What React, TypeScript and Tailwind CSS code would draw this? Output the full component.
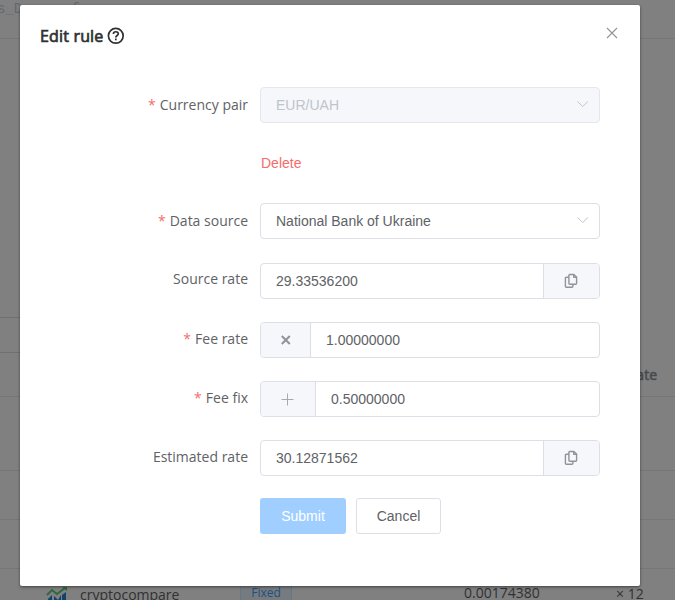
import React from 'react';

const sans = "font-['Open_Sans','Noto_Sans',sans-serif]";
const arial = "font-['Liberation_Sans',Arial,sans-serif]";

function Label({ text, required, className = '' }: { text: string; required?: boolean; className?: string }) {
  return (
    <label className={`${sans} w-[240px] shrink-0 pr-3 text-right text-[14px] leading-9 text-[#606266] ${className}`}>
      {required && <span className="mr-1 text-[#f56c6c]">*</span>}
      {text}
    </label>
  );
}

function Chevron() {
  return (
    <svg className="relative -top-px" width="12" height="8" viewBox="0 0 12 8" fill="none" stroke="#c0c4cc" strokeWidth="1">
      <path d="M.5 1.500 5.700 6.500 10.900 1.500" />
    </svg>
  );
}

function Copy() {
  return (
    <svg className="mr-[2px]" width="14" height="16" viewBox="0 0 14 16" fill="none" stroke="#909399" strokeWidth="1.4" strokeLinejoin="round">
      <path d="M5.900 1.500h4l2.700 2.400v6.300q0 1-1 1H5.900q-1 0-1-1V2.500q0-1 1-1z" />
      <path d="M9.700 1.800v2.400h2.700" />
      <path d="M4.900 4.300H2.400q-1 0-1 1v7.900q0 1 1 1h5.500q1 0 1-1v-1.900" />
    </svg>
  );
}

function Select({ value, disabled }: { value: string; disabled?: boolean }) {
  return (
    <div
      className={`${arial} flex h-9 w-[340px] items-center justify-between rounded border pr-[10px] pl-[15px] text-[14px] ${
        disabled ? 'border-[#e4e7ed] bg-[#f5f7fa] text-[#c0c4cc]' : 'border-[#dcdfe6] bg-white text-[#606266]'
      }`}
    >
      <span>{value}</span>
      <Chevron />
    </div>
  );
}

function Field({ value, prefix, prefixWidth = '', copy }: { value: string; prefix?: React.ReactNode; prefixWidth?: string; copy?: boolean }) {
  return (
    <div className={`${arial} flex h-9 w-[340px] overflow-hidden rounded border border-[#dcdfe6] bg-white text-[14px] text-[#606266]`}>
      {prefix && <span className={`flex items-center justify-center border-r border-[#dcdfe6] bg-[#f5f7fa] ${prefixWidth}`}>{prefix}</span>}
      <span className="flex flex-1 items-center pl-[15px]">{value}</span>
      {copy && (
        <span className="flex w-14 items-center justify-center border-l border-[#dcdfe6] bg-[#f5f7fa]">
          <Copy />
        </span>
      )}
    </div>
  );
}

function Backdrop() {
  return (
    <div className={`${sans} flex h-[600px] w-full flex-col bg-[#808080] text-[14px] text-[#303133]`}>
      <div className="h-[39px] shrink-0 border-b border-[#777778] font-['Liberation_Mono',monospace] text-[14px] leading-[19px] text-[#626970]">
        <span className="-ml-[3px]">s_D</span>
        <span className="ml-[49px]">f</span>
      </div>
      <div className="h-[279px] w-10 shrink-0 border-b border-[#6e7073]" />
      <div className="h-[35px] w-10 shrink-0 border-b border-[#6e7073]" />
      <div className="flex h-11 shrink-0 items-center justify-end border-b border-[#757679] pr-[18px] font-medium text-[#484a4d] [-webkit-text-stroke:0.6px_#484a4d]">Rate</div>
      <div className="h-[74px] shrink-0 border-b border-[#757679]" />
      <div className="h-[49px] shrink-0 border-b border-[#757679]" />
      <div className="h-[49px] shrink-0 border-b border-[#757679]" />
      <div className="flex h-[31px] shrink-0">
        <svg className="mt-[17px] ml-[46px] shrink-0" width="22" height="20" viewBox="0 0 22 20">
          <path d="M2 13 6 9v11H2zM8 20V10l4 4 3-5v11zM16 9l4-3v14h-4z" fill="#12436b" />
          <path d="m1 9 5-5 5 4 8-6" fill="none" stroke="#2d693e" strokeWidth="2" />
          <path d="M16 1h5v4" fill="#2d693e" />
        </svg>
        <span className="mt-[15px] ml-3 w-[160px] leading-[22px]">cryptocompare</span>
        <span className="mt-[12px] flex h-6 w-[52px] shrink-0 items-center justify-center border border-[#63768a] bg-[#767b80] text-[12px] leading-6 text-[#204f80]">Fixed</span>
        <span className="mt-[13px] ml-[172px] w-[152px] leading-[22px]">0.00174380</span>
        <span className="mt-[14px] leading-[22px]">× 12</span>
      </div>
    </div>
  );
}

export default function App() {
  return (
    <div className="relative h-[600px] w-[675px] overflow-hidden">
      <Backdrop />
      <section role="dialog" className="absolute top-[5px] left-5 flex h-[581px] w-[620px] flex-col rounded-[2px] bg-white shadow-[0_1px_3px_rgba(0,0,0,0.5)]">
        <header className="flex h-[82px] shrink-0 items-start justify-between pr-[22px] pl-5">
          <h1 className={`${sans} mt-[19px] flex items-center text-[16px] leading-6 font-medium tracking-[0.17px] text-[#303133] [-webkit-text-stroke:0.7px_#303133]`}>
            Edit rule
            <svg className="ml-1" width="18" height="18" viewBox="0 0 18 18" fill="none" stroke="#303133" strokeWidth="1.7">
              <circle cx="8.8" cy="8.8" r="7.400" />
              <path d="M6.400 7c0-3 4.900-2.900 4.900-.2C11.300 8.500 8.800 8.400 8.800 10.400" />
              <path d="M8.800 11.500v1.800" />
            </svg>
          </h1>
          <svg className="mt-[22px]" width="12" height="12" viewBox="0 0 12 12" stroke="#909399" strokeWidth="1.1">
            <path d="m1 1 10 10M11 1 1 11" />
          </svg>
        </header>
        <div className="flex h-9 shrink-0">
          <Label text="Currency pair" required />
          <Select value="EUR/UAH" disabled />
        </div>
        <div className={`${arial} mt-[22px] flex h-9 shrink-0 items-center pl-[241px] text-[14px] text-[#f56c6c]`}>Delete</div>
        <div className="mt-[22px] flex h-9 shrink-0">
          <Label text="Data source" required />
          <Select value="National Bank of Ukraine" />
        </div>
        <div className="mt-6 flex h-9 shrink-0">
          <Label text="Source rate" className="-mt-[2px]" />
          <Field value="29.33536200" copy />
        </div>
        <div className="mt-[23px] flex h-9 shrink-0">
          <Label text="Fee rate" required className="-mt-px" />
          <Field
            value="1.00000000"
            prefixWidth="w-[50px]"
            prefix={
              <svg width="10" height="10" viewBox="0 0 10 10" stroke="#909399" strokeWidth="2">
                <path d="m.8 1 8 8M8.800 1 .8 9" />
              </svg>
            }
          />
        </div>
        <div className="mt-[23px] flex h-9 shrink-0">
          <Label text="Fee fix" required className="-mt-px" />
          <Field
            value="0.50000000"
            prefixWidth="w-[55px]"
            prefix={
              <svg className="mr-px" width="13" height="13" viewBox="0 0 13 13" stroke="#a6a9ae" strokeWidth="1">
                <path d="M6.500.5v12M.5 6.500h12" />
              </svg>
            }
          />
        </div>
        <div className="mt-[23px] flex h-9 shrink-0">
          <Label text="Estimated rate" className="-mt-px" />
          <Field value="30.12871562" copy />
        </div>
        <div className={`${arial} mt-[22px] flex gap-[10px] pl-[240px] text-[14px]`}>
          <button className="h-9 w-[86px] rounded-[3px] bg-[#a0cfff] text-white">Submit</button>
          <button className="h-9 w-[85px] rounded-[3px] border border-[#dcdfe6] bg-white text-[#606266]">Cancel</button>
        </div>
      </section>
    </div>
  );
}
